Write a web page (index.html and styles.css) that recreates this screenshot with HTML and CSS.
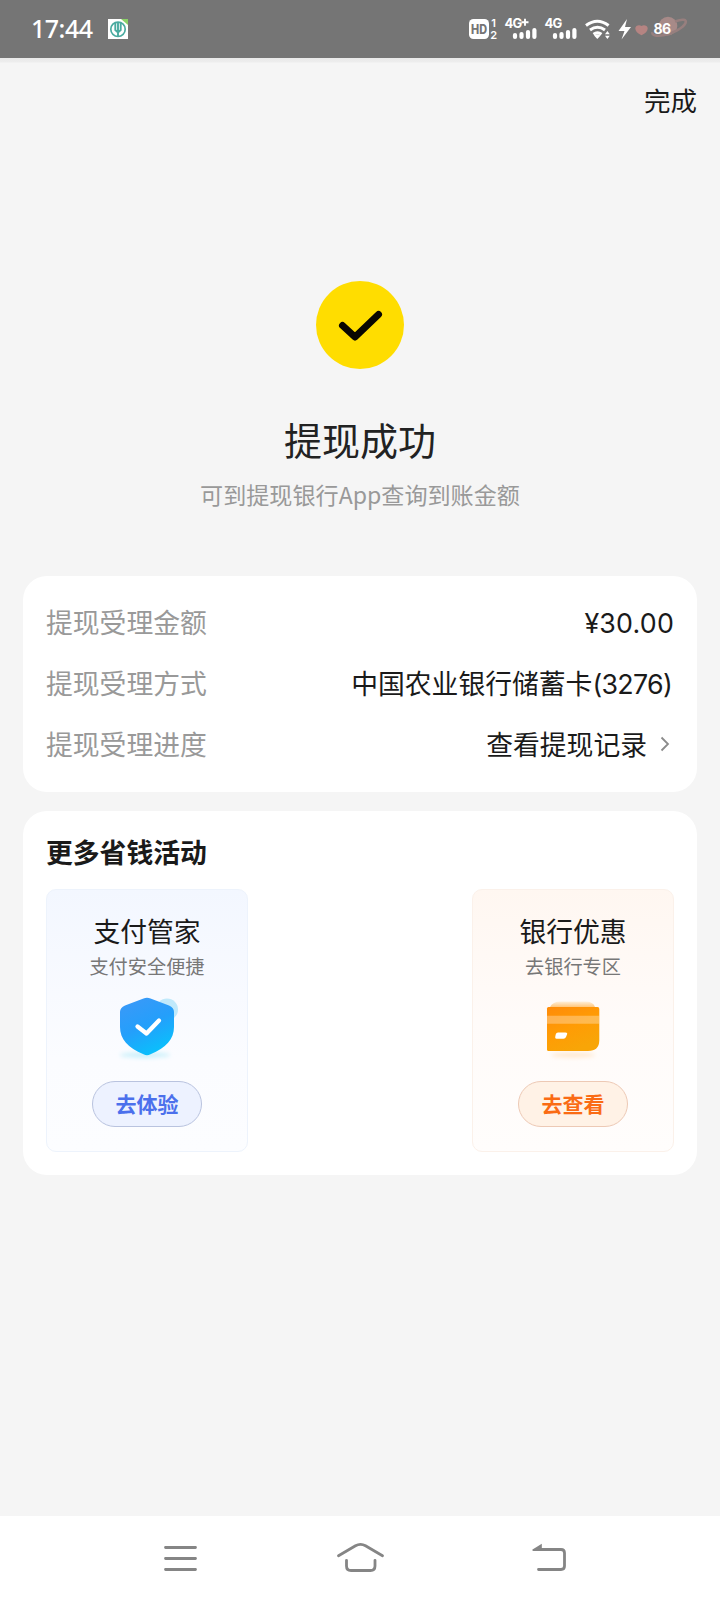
FILE: index.html
```html
<!DOCTYPE html>
<html lang="zh-CN">
<head>
<meta charset="utf-8">
<title>提现成功</title>
<link rel="stylesheet" href="styles.css">
</head>
<body>
<div class="screen">
  <header class="status">
    <span class="time">17:44</span>
    <svg class="bank" width="20" height="20" viewBox="0 0 20 20">
      <rect width="20" height="20" fill="#fff"/>
      <circle cx="10" cy="10.3" r="7.2" fill="none" stroke="#4aaba0" stroke-width="1.7"/>
      <path d="M10 3v14M7.3 4v7l2.7 2.5L12.7 11V4" fill="none" stroke="#4aaba0" stroke-width="1.9"/>
      <path d="M13 0h7v6z" fill="#8bd067"/>
    </svg>
    <svg class="indicators" width="230" height="58" viewBox="460 0 230 58">
      <rect x="469" y="19" width="20" height="20" rx="4.5" fill="#fff"/>
      <text x="479" y="33.5" class="hd" textLength="16" lengthAdjust="spacingAndGlyphs">HD</text>
      <text x="491.3" y="27" class="sim">1</text>
      <text x="490.3" y="38.5" class="sim">2</text>
      <text x="504.5" y="28.3" class="net">4G</text>
      <path d="M525 18.800v7M521.500 22.300h7" stroke="#fff" stroke-width="1.900"/>
      <g stroke="#fff" stroke-width="4.200" stroke-linecap="round">
        <path d="M515 35v2M521.500 34v3M528 32v5M534.400 30v7"/>
        <path d="M555 35v2M561.500 34v3M568 32v5M574.400 30v7"/>
      </g>
      <text x="544.5" y="28.3" class="net">4G</text>
      <g fill="none" stroke="#fff" stroke-width="3">
        <path d="M586 25.500q11.300-8.500 22.600 0M590 30q7.500-5.500 15 0M593.500 34.300q4-2.800 8 0"/>
      </g>
      <path d="M594 35.500q3.300-2 6.600 0L597.300 39zM605 34.300l2.400-3.400 2.400 3.400zM605 35.700l2.400 3.400 2.400-3.400z" fill="#fff"/>
      <path d="M627 19l-8.500 12h6L621.500 39.500l9.500-12.500h-6z" fill="#fff"/>
      <path d="M641.500 35.300c-4-1.800-6.200-4.300-6.200-6.800 0-3.600 4.600-4 6.200-2.500 1.600-1.500 6.200-1.100 6.200 2.500 0 2.500-2.200 5-6.200 6.800z" fill="#b58482"/>
      <circle cx="668" cy="26" r="9.300" fill="#a78a88"/>
      <path d="M675 21.500c8-3 12-2 10.500 1.500-2 4.500-13 11-22 12.300-8 1.200-12-.3-11-3" fill="none" stroke="#977f7e" stroke-width="2.600"/>
      <text x="653.5" y="33.700" class="battery">86</text>
    </svg>
  </header>

  <main class="page">
    <div class="topbar"><span>完成</span></div>
    <section class="result">
      <svg width="88" height="88" viewBox="0 0 88 88">
        <circle cx="44" cy="44" r="44" fill="#ffdd00"/>
        <path d="M26.500 44.500L39 56L62.500 33.500" fill="none" stroke="#090700" stroke-width="7" stroke-linecap="round" stroke-linejoin="round"/>
      </svg>
      <h1>提现成功</h1>
      <p>可到提现银行App查询到账金额</p>
    </section>

    <section class="card details">
      <div class="row"><span class="label">提现受理金额</span><span class="latin amount">¥30.00</span></div>
      <div class="row"><span class="label">提现受理方式</span><span>中国农业银行储蓄卡<span class="latin tail">(3276)</span></span></div>
      <div class="row"><span class="label">提现受理进度</span><span class="link">查看提现记录<svg width="10" height="16" viewBox="0 0 10 16"><path d="M1.500 1.500L8 8L1.500 14.500" fill="none" stroke="#8b8b8b" stroke-width="1.800"/></svg></span></div>
    </section>

    <section class="card promo">
      <h2>更多省钱活动</h2>
      <div class="tiles">
        <article class="tile blue">
          <h3>支付管家</h3>
          <p>支付安全便捷</p>
          <svg class="art" width="80" height="68" viewBox="0 0 80 68">
            <defs>
              <linearGradient id="shield" x1="0.2" y1="0" x2="0.65" y2="1"><stop offset="0" stop-color="#3a99f8"/><stop offset=".5" stop-color="#249ffb"/><stop offset="1" stop-color="#08c2fc"/></linearGradient>
              <filter id="soft" x="-30%" y="-100%" width="160%" height="300%"><feGaussianBlur stdDeviation="2.200"/></filter>
            </defs>
            <ellipse cx="38" cy="61" rx="25" ry="3" fill="#cdf1fb" filter="url(#soft)"/>
            <circle cx="60" cy="15.500" r="11" fill="#c0e9fb"/>
            <path d="M36.500 4.500Q40 3 43.500 4.500L62 11.500Q67 13.500 67 18V33C67 45 59 54 43.500 60.300Q40 62 36.500 60.300C21 54 13 45 13 33V18Q13 13.500 18 11.500Z" fill="url(#shield)"/>
            <path d="M30.500 32.500L39.500 39.500L52 26.500" fill="none" stroke="#fff" stroke-width="4.300" stroke-linecap="round" stroke-linejoin="round"/>
          </svg>
          <span class="button">去体验</span>
        </article>
        <article class="tile orange">
          <h3>银行优惠</h3>
          <p>去银行专区</p>
          <svg class="art" width="80" height="68" viewBox="0 0 80 68">
            <defs>
              <linearGradient id="gold" x1="0" y1="0" x2="0.5" y2="1"><stop offset="0" stop-color="#ff8b09"/><stop offset=".55" stop-color="#ff9c05"/><stop offset="1" stop-color="#f8a507"/></linearGradient>
              <linearGradient id="back" x1="0" y1="0" x2="0" y2="1"><stop offset="0" stop-color="#fff0db"/><stop offset="1" stop-color="#ffc77c"/></linearGradient>
            </defs>
            <g transform="translate(0 1)">
              <ellipse cx="40" cy="60" rx="22" ry="2.500" fill="#ffe8cf" filter="url(#soft)"/>
              <path d="M17 12Q20 6.500 27 6.500H53Q60 6.500 62 12Z" fill="url(#back)"/>
              <path d="M15.500 12H64.500Q66.300 12 66.300 14V45Q66.300 56 55 56H15.500Q14 56 14 54.500V13.500Q14 12 15.500 12Z" fill="url(#gold)"/>
              <path d="M14 20.700H66.300V28.800H14Z" fill="#fff" opacity=".3"/>
              <path d="M25 37.500H32.500Q34.800 37.500 34 39.500L33 42Q32.300 43.700 30.500 43.700H23.500Q21.800 43.700 22.200 42L22.700 39.500Q23.200 37.500 25 37.500Z" fill="#fff"/>
            </g>
          </svg>
          <span class="button">去查看</span>
        </article>
      </div>
    </section>
  </main>

  <nav class="navbar">
    <svg width="720" height="84" viewBox="0 1516 720 84">
      <g fill="none" stroke="#858585" stroke-width="2.800" stroke-linecap="round" stroke-linejoin="round">
        <path d="M165.500 1547.500H195.500M165.500 1558.500H195.500M165.500 1569.500H195.500"/>
        <path d="M338.500 1555.700L355.500 1545.800Q360.500 1542.800 365.500 1545.800L382.500 1555.700M346.500 1560.300V1566Q346.500 1570.500 351 1570.500H370.500Q375 1570.500 375 1566V1560.300"/>
        <path d="M538.500 1569.500H561Q564.500 1569.500 564.500 1566V1553Q564.500 1549.500 561 1549.500H540"/>
      </g>
      <path d="M532.500 1549.500L541.800 1543.800V1550.900H533.200Q531.500 1550.500 532.500 1549.500Z" fill="#858585"/>
    </svg>
  </nav>
</div>
</body>
</html>
```
FILE: styles.css
```css
* { box-sizing: border-box; }
body {
  margin: 0;
  font-family: "Noto Sans CJK SC", sans-serif;
  color: #1a1a1a;
  background: #f5f5f5;
}
h1, h2, h3, p { margin: 0; font-weight: 400; }
svg { display: block; flex: none; }
.screen { display: flex; flex-direction: column; width: 720px; height: 1600px; overflow: hidden; }
.status {
  display: flex;
  align-items: center;
  height: 58px;
  flex: none;
  padding: 0 30px 0 31px;
  background: #757575;
  color: #fff;
}
.time { width: 77px; font: 500 25px/56px "Noto Sans", sans-serif; height: 58px; letter-spacing: -.5px; white-space: nowrap; }
.indicators { margin-left: auto; }
.indicators text { fill: #fff; font-family: Inter, sans-serif; }
.indicators .hd { fill: #757575; font-size: 12.5px; font-weight: 800; text-anchor: middle; }
.indicators .sim { font-size: 11px; font-weight: 600; }
.indicators .net { font-size: 13px; font-weight: 700; letter-spacing: -.7px; }
.indicators .battery { font-size: 14px; font-weight: 700; letter-spacing: -.6px; }
.page {
  flex: 1;
  padding: 0 23px;
  background: linear-gradient(#e9e9e9 0, #ededed 4px, #f5f5f5 5px);
}
.topbar { display: flex; justify-content: flex-end; height: 84px; font-size: 26.5px; line-height: 83px; }
.result { display: flex; flex-direction: column; align-items: center; height: 434px; padding-top: 139px; }
.result h1 { margin-top: 42px; font-size: 38px; line-height: 56px; color: #222; }
.result p { margin-top: 10px; font-size: 23.1px; line-height: 34px; color: #999; white-space: nowrap; }
.card { background: #fff; border-radius: 24px; }
.details { height: 216px; padding: 15px 23px; }
.row {
  display: flex;
  justify-content: space-between;
  height: 61px;
  font-size: 26.8px;
  line-height: 61px;
  white-space: nowrap;
}
.label { color: #999; }
.latin { font-family: Inter, sans-serif; }
.amount { padding-top: 2px; letter-spacing: .2px; }
.tail { padding-right: 2px; letter-spacing: -.7px; }
.link { display: flex; align-items: center; gap: 13px; padding-right: 4px; }
.promo { height: 364px; margin-top: 19px; padding: 22px 23px 0; }
.promo h2 { font-size: 26.8px; line-height: 38px; font-weight: 700; }
.tiles { display: flex; justify-content: space-between; margin-top: 18px; }
.tile {
  display: flex;
  flex-direction: column;
  align-items: center;
  width: 202px;
  height: 263px;
  padding-top: 21px;
  border: 1px solid;
  border-radius: 10px;
}
.tile h3 { font-size: 26.8px; line-height: 40px; }
.tile p { margin-top: 1px; font-size: 19.2px; line-height: 28px; color: #777; }
.art { margin-top: 14px; }
.button {
  width: 110px;
  height: 46px;
  margin-top: 19px;
  border: 1px solid;
  border-radius: 23px;
  font-size: 21px;
  line-height: 42px;
  font-weight: 700;
  text-align: center;
}
.blue { background: linear-gradient(#f3f7ff, #fbfcff 65%, #fcfdff); border-color: #edf3fc; }
.blue .button { background: #edf2ff; border-color: #b9c3df; color: #4b70ec; }
.orange { background: linear-gradient(#fff7f1, #fffbf9 50%, #fffdfc); border-color: #fbf1ea; }
.orange .button { background: #fff2e6; border-color: #edc9b5; color: #fa6b14; }
.navbar { flex: none; height: 84px; background: #fff; }
```
